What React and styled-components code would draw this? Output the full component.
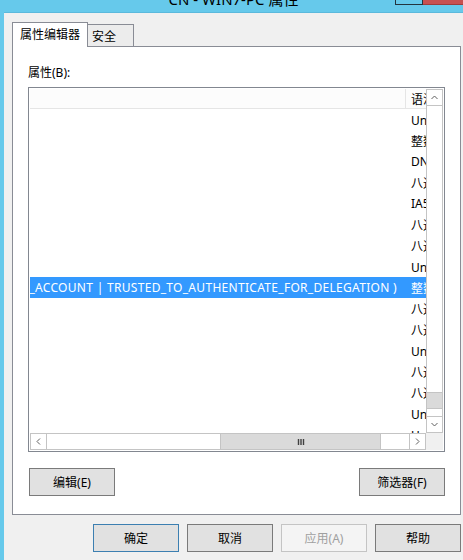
import React from 'react';
import styled, { createGlobalStyle } from 'styled-components';

const GlobalStyle = createGlobalStyle`
  html, body {
    margin: 0;
    padding: 0;
    background: #f0f0f0;
  }
  body {
    font-family: "Noto Sans", "Noto Sans CJK SC", sans-serif;
    font-size: 12px;
    color: #000;
  }
  * {
    box-sizing: border-box;
  }
`;

const Window = styled.div`
  width: 463px;
  height: 560px;
  overflow: hidden;
  display: flex;
  flex-direction: column;
  background: #f0f0f0;
  border-left: 4px solid #66c9eb;
`;

const TitleBar = styled.div`
  flex: none;
  height: 13px;
  display: flex;
  align-items: flex-start;
  overflow: hidden;
  background: #66c9eb;
  border-bottom: 1px solid #5bb9dc;
`;

const TitleSpacer = styled.div`
  flex: none;
  width: 68px;
`;

const TitleText = styled.div`
  flex: 1;
  margin-top: -11px;
  font-size: 15px;
  line-height: 20px;
  text-align: center;
  white-space: nowrap;
`;

const Controls = styled.div`
  flex: none;
  width: 68px;
  display: flex;
`;

const MinButton = styled.div`
  width: 28px;
  height: 5px;
  border: 1px solid #23343f;
  border-top: none;
`;

const CloseButton = styled.div`
  width: 40px;
  height: 5px;
  background: #c75050;
  border-bottom: 1px solid #9e3b3b;
`;

const Body = styled.div`
  flex: 1;
  display: flex;
  flex-direction: column;
  padding: 9px 2px 0 8px;
`;

const TabStrip = styled.div`
  height: 24px;
  display: flex;
  align-items: flex-end;
`;

const Tab = styled.div`
  position: relative;
  display: flex;
  align-items: center;
  border: 1px solid #898c95;
  border-bottom: none;
  white-space: nowrap;
  ${p => p.$active ? `
    z-index: 1;
    height: 25px;
    margin-bottom: -1px;
    padding: 0 0 2px 7px;
    width: 76px;
    background: #fff;
  ` : `
    height: 22px;
    margin-left: -1px;
    padding: 0 0 0 4px;
    width: 47px;
    background: #ececec;
  `}
`;

const Panel = styled.div`
  height: 469px;
  display: flex;
  flex-direction: column;
  padding: 17px 15px 18px;
  background: #fff;
  border: 1px solid #898c95;
`;

const FieldLabel = styled.div`
  line-height: 17px;
  margin-bottom: 6px;
`;

const ListBox = styled.div`
  height: 365px;
  display: grid;
  grid-template-columns: 1fr 17px;
  grid-template-rows: 1fr 17px;
  padding: 1px;
  background: #fff;
  border: 1px solid #828790;
`;

const DataArea = styled.div`
  overflow: hidden;
  display: flex;
  flex-direction: column;
`;

const HeaderRow = styled.div`
  flex: none;
  height: 20px;
  display: flex;
  align-items: center;
  background: #fcfcfc;
  border-bottom: 1px solid #e5e5e5;
`;

const HeaderCell = styled.div`
  flex: none;
  height: 100%;
  display: flex;
  align-items: center;
  white-space: nowrap;
  ${p => p.$first ? `
    width: 375px;
  ` : `
    padding-left: 5px;
    border-left: 1px solid #e5e5e5;
  `}
`;

const Row = styled.div`
  flex: none;
  height: 21px;
  display: flex;
  align-items: center;
  background: ${p => (p.$selected ? '#3399ff' : 'transparent')};
  color: ${p => (p.$selected ? '#fff' : '#000')};
`;

const ValueCell = styled.div`
  flex: none;
  width: 375px;
  display: flex;
  justify-content: flex-end;
  overflow: hidden;
  padding-right: 8px;
  letter-spacing: 0.3px;
  white-space: nowrap;
`;

const SyntaxCell = styled.div`
  flex: none;
  padding-left: 6px;
  white-space: nowrap;
`;

const VScroll = styled.div`
  display: flex;
  flex-direction: column;
  border: 1px solid #c4c4c4;
  background: #fff;
`;

const HScroll = styled.div`
  display: flex;
  border: 1px solid #c4c4c4;
  background: #fff;
`;

const ArrowButton = styled.div`
  flex: none;
  display: flex;
  align-items: center;
  justify-content: center;
  background: #fff;
  ${p => ({
    up: 'height: 16px; border-bottom: 1px solid #c4c4c4;',
    down: 'height: 16px; border-top: 1px solid #c4c4c4;',
    left: 'width: 16px; border-right: 1px solid #c4c4c4;',
    right: 'width: 16px; border-left: 1px solid #c4c4c4;',
  }[p.$dir])}
`;

const Track = styled.div`
  flex: 1;
  display: flex;
  flex-direction: ${p => (p.$vertical ? 'column' : 'row')};
`;

const ThumbV = styled.div`
  height: 17px;
  margin-top: auto;
  margin-bottom: 7px;
  background: #dadada;
  border-top: 1px solid #c4c4c4;
  border-bottom: 1px solid #c4c4c4;
`;

const ThumbH = styled.div`
  width: 161px;
  display: flex;
  align-items: center;
  justify-content: center;
  background: #dadada;
  border-left: 1px solid #c4c4c4;
  border-right: 1px solid #c4c4c4;
`;

const Corner = styled.div`
  background: #f0f0f0;
`;

const ButtonRow = styled.div`
  display: flex;
  justify-content: space-between;
  margin-top: 16px;
  padding-left: 1px;
`;

const Button = styled.button`
  width: 86px;
  height: 28px;
  padding: 0;
  font-family: inherit;
  font-size: 12px;
  color: ${p => (p.disabled ? '#a0a0a0' : '#000')};
  background: ${p => (p.disabled ? '#f4f4f4' : '#e1e1e1')};
  border: 1px solid ${p => (p.$default ? '#3c7fb1' : p.disabled ? '#c4c4c4' : '#7a7a7a')};
  border-radius: 0;
`;

const Footer = styled.div`
  display: flex;
  justify-content: flex-end;
  gap: 8px;
  margin-top: 9px;
`;

const Chevron = ({ dir }) => {
  const pts = {
    up: '0.5,4 3.5,1 6.5,4',
    down: '0.5,1 3.5,4 6.5,1',
    left: '4,0.5 1,3.5 4,6.5',
    right: '1,0.5 4,3.5 1,6.5',
  }[dir];
  const vertical = dir === 'up' || dir === 'down';
  return (
    <svg width={vertical ? 7 : 5} height={vertical ? 5 : 7} viewBox={vertical ? '0 0 7 5' : '0 0 5 7'}>
      <polyline points={pts} fill="none" stroke="#606060" strokeWidth="1" />
    </svg>
  );
};

const Grip = () => (
  <svg width="8" height="6" viewBox="0 0 8 6">
    <path d="M1.5 0v6M4 0v6M6.5 0v6" stroke="#404040" strokeWidth="1.4" />
  </svg>
);

const rows = [
  'Unicode 字符串',
  '整数',
  'DN',
  '八进制字符串',
  'IA5-String',
  '八进制字符串',
  '八进制字符串',
  'Unicode 字符串',
  '整数',
  '八进制字符串',
  '八进制字符串',
  'Unicode 字符串',
  '八进制字符串',
  '八进制字符串',
  'Unicode 字符串',
  'Unicode 字符串',
];

const selectedRow = 8;
const selectedValue = '0x1001000 = ( WORKSTATION_TRUST_ACCOUNT | TRUSTED_TO_AUTHENTICATE_FOR_DELEGATION )';

const App = () => {
  return (
    <Window>
      <GlobalStyle />
      <TitleBar>
        <TitleSpacer />
        <TitleText>CN - WIN7-PC 属性</TitleText>
        <Controls>
          <MinButton />
          <CloseButton />
        </Controls>
      </TitleBar>

      <Body>
        <TabStrip>
          <Tab $active>属性编辑器</Tab>
          <Tab>安全</Tab>
        </TabStrip>

        <Panel>
          <FieldLabel>属性(B):</FieldLabel>

          <ListBox>
            <DataArea>
              <HeaderRow>
                <HeaderCell $first />
                <HeaderCell>语法</HeaderCell>
              </HeaderRow>
              {rows.map((syntax, i) => (
                <Row key={i} $selected={i === selectedRow}>
                  <ValueCell>{i === selectedRow ? selectedValue : ''}</ValueCell>
                  <SyntaxCell>{syntax}</SyntaxCell>
                </Row>
              ))}
            </DataArea>

            <VScroll>
              <ArrowButton $dir="up"><Chevron dir="up" /></ArrowButton>
              <Track $vertical>
                <ThumbV />
              </Track>
              <ArrowButton $dir="down"><Chevron dir="down" /></ArrowButton>
            </VScroll>

            <HScroll>
              <ArrowButton $dir="left"><Chevron dir="left" /></ArrowButton>
              <Track>
                <ThumbH style={{ marginLeft: 173 }}><Grip /></ThumbH>
              </Track>
              <ArrowButton $dir="right"><Chevron dir="right" /></ArrowButton>
            </HScroll>

            <Corner />
          </ListBox>

          <ButtonRow>
            <Button>编辑(E)</Button>
            <Button>筛选器(F)</Button>
          </ButtonRow>
        </Panel>

        <Footer>
          <Button $default>确定</Button>
          <Button>取消</Button>
          <Button disabled>应用(A)</Button>
          <Button>帮助</Button>
        </Footer>
      </Body>
    </Window>
  );
};

export default App;
